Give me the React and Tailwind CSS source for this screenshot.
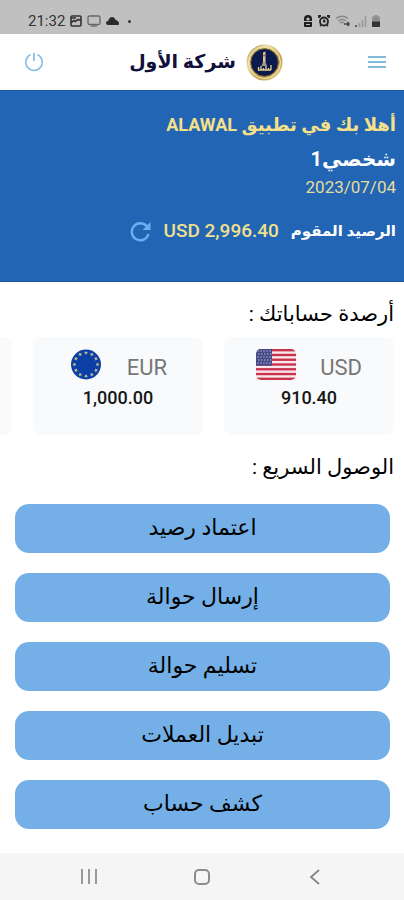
import React from "react";

const arabic = "font-['Roboto','DejaVu_Sans',sans-serif]";

const actions = ["اعتماد رصيد", "إرسال حوالة", "تسليم حوالة", "تبديل العملات", "كشف حساب"];

function StatusBar() {
  return (
    <div dir="ltr" className="flex h-[34px] items-center justify-between bg-[#c0c0c0] pt-2 pr-6 pl-7 text-[#333]">
      <div className="flex items-center gap-[5px]">
        <span className="text-[15px] leading-4">21:32</span>
        <svg width="12" height="12" viewBox="0 0 12 12" fill="none" stroke="#333" strokeWidth="1.6">
          <rect x="1" y="1" width="10" height="10" rx="1" />
          <path d="M1 7.500l3-2 1.500 1L8 4.500l3 1M1 3h5" />
        </svg>
        <svg width="14" height="12" viewBox="0 0 14 12" fill="none" stroke="#666" strokeWidth="1.3">
          <rect x="1" y="1" width="12" height="8.5" rx="1.5" />
          <path d="M4 11h6" />
        </svg>
        <svg width="13" height="8" viewBox="0 0 13 8" fill="#2b2b2b">
          <path d="M2 8a2 2 0 0 1 0-4C3 1.500 4.500 0 6 0c2 0 3.200 1.400 3.600 3C12 3.500 13 5 13 6.500c0 1-.5 1.500-1 1.500z" />
        </svg>
        <span className="ml-1 size-[3px] rounded-full bg-[#333]" />
      </div>
      <div className="flex items-center gap-[5px]">
        <svg width="10" height="12" viewBox="0 0 10 12" fill="#1f1f1f">
          <path d="M5 0a4 4 0 0 1 4 4v2H1V4a4 4 0 0 1 4-4zM1 7h8v4a1 1 0 0 1-1 1H2a1 1 0 0 1-1-1z" />
          <circle cx="5" cy="4" r="1.6" fill="#c0c0c0" />
          <path d="M3 9.500h4" stroke="#c0c0c0" />
        </svg>
        <svg width="12" height="12" viewBox="0 0 12 12" fill="none" stroke="#222" strokeWidth="1.8">
          <circle cx="6" cy="6.500" r="4" />
          <path d="M1 3V1h2M9 1h2v2M2 11l1-1M10 11l-1-1M6 4.500v2h1.500" />
        </svg>
        <svg width="15" height="12" viewBox="0 0 15 12" fill="none" stroke="#888" strokeWidth="1.5">
          <path d="M1 3.500c3.500-3 8.500-3 12 0M3 6c2.500-2 5.500-2 8 0M5 8c1.200-1 2.800-1 4 0" />
          <path d="M9 9h5M12.500 7l1.500 2-1.500 2" stroke="#444" />
        </svg>
        <svg width="12" height="12" viewBox="0 0 12 12" fill="none">
          <path d="M1 12v-2" stroke="#444" strokeWidth="1.5" />
          <path d="M4.500 12V8M7.500 12V5M10.500 12V1" stroke="#999" strokeWidth="1.6" />
        </svg>
        <svg width="8" height="12" viewBox="0 0 8 12">
          <path d="M2.500 0h3v1.500H8V12H0V1.500h2.500z" fill="#909090" />
          <path d="M0 6.500h8V11a1 1 0 0 1-1 1H1a1 1 0 0 1-1-1z" fill="#333" />
        </svg>
      </div>
    </div>
  );
}

function Emblem() {
  return (
    <svg width="37" height="37" viewBox="0 0 37 37" aria-hidden="true">
      <defs>
        <linearGradient id="gold" x1="0" y1="0" x2="1" y2="1">
          <stop offset="0" stopColor="#9a7b3c" />
          <stop offset=".3" stopColor="#ecdca0" />
          <stop offset=".65" stopColor="#c09a4a" />
          <stop offset="1" stopColor="#f0dfa0" />
        </linearGradient>
      </defs>
      <circle cx="18.500" cy="18.500" r="18" fill="url(#gold)" />
      <circle cx="18.500" cy="18.500" r="16" fill="none" stroke="#f4e8b8" strokeWidth="1" />
      <circle cx="18.500" cy="18.500" r="13.800" fill="#0b1a4c" stroke="#7c6128" />
      <path d="M17 8.500l2.500-1V18h-2.500z" fill="#dfc58c" />
      <path d="M17.300 11.500h2" stroke="#a84f30" strokeWidth="1.500" />
      <path d="M17 18l-1.500 4h5.500l-1.500-4z" fill="#a99a83" />
      <path d="M12 26h13M12.500 26v-3M15 26v-4M17.500 26v-2M20 26v-4M22.500 26v-2M25 26v-5" stroke="#e5cf92" strokeWidth="1.300" fill="none" />
    </svg>
  );
}

function Header() {
  return (
    <header className="flex h-14 items-center justify-between bg-white pr-[18px] pl-6">
      <button aria-label="القائمة" className="flex w-[18px] flex-col gap-[3px]">
        <span className="h-[2px] w-full bg-[#83b9da]" />
        <span className="h-[2px] w-full bg-[#83b9da]" />
        <span className="h-[2px] w-full bg-[#83b9da]" />
      </button>
      <div className="flex items-center gap-[10px]">
        <Emblem />
        <h1 className="text-[19px] leading-8 font-bold text-[#10103c]">شركة الأول</h1>
      </div>
      <button aria-label="خروج">
        <svg width="20" height="20" viewBox="0 0 20 20" fill="none" stroke="#82bce0" strokeWidth="1.500">
          <path d="M6.500 2.600a8.300 8.300 0 1 0 7 0" />
          <path d="M10 1v8" strokeWidth="1.700" />
        </svg>
      </button>
    </header>
  );
}

function UsFlag() {
  const stars = [];
  for (let r = 0; r < 5; r++) for (let c = 0; c < 5; c++) stars.push([2 + c * 3 + (r % 2) * 0.8, 2 + r * 3]);
  return (
    <svg width="40" height="31" viewBox="0 0 40 31" aria-hidden="true">
      <clipPath id="us"><rect width="40" height="31" rx="5" /></clipPath>
      <g clipPath="url(#us)">
        <rect width="40" height="31" fill="#f9e9ee" />
        {[0, 2, 4, 6, 8, 10, 12].map((i) => (
          <rect key={i} y={(i * 31) / 13} width="40" height="2.385" fill="#c9334c" />
        ))}
        <rect width="16" height="16.700" fill="#454a86" />
        {stars.map(([x, y], i) => (
          <circle key={i} cx={x} cy={y} r=".7" fill="#b9bbd8" />
        ))}
      </g>
    </svg>
  );
}

function EuFlag() {
  return (
    <svg width="34" height="31" viewBox="3 0 34 31" aria-hidden="true">
      <circle cx="20" cy="15.500" r="15" fill="#0b3fa6" />
      {Array.from({ length: 12 }, (_, i) => (
        <path
          key={i}
          transform={`rotate(${i * 30} 20 15.500) translate(20 3.800)`}
          d="M0-2L.6-.6 2-.6.9.4 1.300 1.800 0 1-1.300 1.800-.9.400-2-.6-.6-.6z"
          fill="#c9c48c"
        />
      ))}
    </svg>
  );
}

function AccountCard({ code, amount, flag }) {
  return (
    <li className="flex h-[98px] w-[170px] shrink-0 flex-col items-center rounded-lg bg-[#f8fafc] pt-[11px]">
      {code && (
        <>
          <div className="flex items-center gap-6">
            <span className="pt-2 text-[22px] leading-6 text-[#777]">{code}</span>
            {flag}
          </div>
          <span className="pt-[6px] text-[18px] leading-6 font-medium text-[#161616]">{amount}</span>
        </>
      )}
    </li>
  );
}

export default function App() {
  return (
    <div dir="rtl" className={`flex min-h-screen flex-col overflow-hidden bg-white ${arabic}`}>
      <StatusBar />
      <Header />
      <section className="h-48 border-y border-[#1a55a0] bg-[#2265b4] px-2 pt-5">
        <p className="text-[18px] leading-7 font-bold text-[#f5e08a]">أهلا بك في تطبيق ALAWAL</p>
        <p className="pt-1 text-[20px] leading-8 font-bold text-white">شخصي1</p>
        <p className="text-right text-[17px] leading-6 text-[#e6dc9c]" dir="ltr">2023/07/04</p>
        <div className="flex items-center gap-3 pt-[18px]">
          <span className="text-[15px] leading-7 font-bold text-white">الرصيد المقوم</span>
          <span dir="ltr" className="text-[19px] leading-7 font-medium text-[#f0e08e]">USD 2,996.40</span>
          <button aria-label="تحديث">
            <svg width="21" height="21" viewBox="0 0 21 21" fill="none" stroke="#68b0f0" strokeWidth="2.400">
              <path d="M18.500 13a8.500 8.500 0 1 1-1.500-7.500" />
              <path d="M20.500 1v8h-8z" fill="#68b0f0" stroke="none" />
            </svg>
          </button>
        </div>
      </section>
      <main className="flex-1">
        <h2 className="px-[10px] pt-4 pb-[7px] text-[21px] leading-8 text-black">أرصدة حساباتك :</h2>
        <ul className="flex gap-[21px] overflow-hidden pr-[10px]">
          <AccountCard code="USD" amount="910.40" flag={<UsFlag />} />
          <AccountCard code="EUR" amount="1,000.00" flag={<EuFlag />} />
          <AccountCard />
        </ul>
        <h2 className="px-[10px] pt-4 pb-[21px] text-[21px] leading-8 text-black">الوصول السريع :</h2>
        <div className="flex flex-col gap-5 pr-[14px] pb-6 pl-[15px]">
          {actions.map((label) => (
            <button key={label} className="h-[49px] rounded-[14px] bg-[#74b0e7] pb-[2px] text-[22px] leading-8 text-black">
              {label}
            </button>
          ))}
        </div>
      </main>
      <nav dir="ltr" className="flex h-[47px] items-center justify-between bg-[#f5f5f5] px-20 text-[#888]">
        <button aria-label="التطبيقات الأخيرة" className="flex h-[15px] w-[18px] justify-between px-px">
          <span className="w-[2px] bg-[#999]" />
          <span className="w-[2px] bg-[#999]" />
          <span className="w-[2px] bg-[#999]" />
        </button>
        <button aria-label="الرئيسية" className="size-4 rounded-[5px] border-2 border-[#8c8c8c]" />
        <button aria-label="رجوع">
          <svg width="18" height="16" viewBox="0 0 18 16" fill="none" stroke="#858585" strokeWidth="1.800">
            <path d="M13 1L5 8l8 7" />
          </svg>
        </button>
      </nav>
    </div>
  );
}
